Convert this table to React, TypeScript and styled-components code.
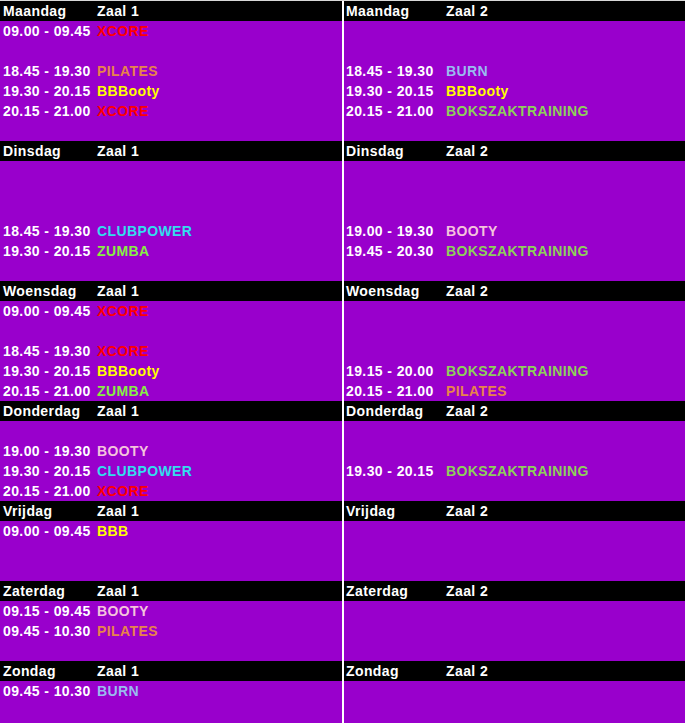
import React, { ReactElement } from "react";
import styled, { createGlobalStyle } from "styled-components";

const GlobalStyle = createGlobalStyle`
  html, body {
    margin: 0;
    padding: 0;
    background: #ffffff;
  }

  body {
    font-family: "Liberation Sans", Arial, sans-serif;
  }
`;

const colors = {
  purple: "#9900cc",
  XCORE: "#ff0000",
  PILATES: "#e8844a",
  BBBooty: "#ffff00",
  BBB: "#ffff00",
  BURN: "#99bbee",
  BOKSZAKTRAINING: "#8fd05a",
  CLUBPOWER: "#33ddee",
  ZUMBA: "#88ee44",
  BOOTY: "#f4c4dc",
};

type Slot = [string, keyof typeof colors] | null;

interface Day {
  name: string;
  left: Slot[];
  right: Slot[];
}

const days: Day[] = [
  {
    name: "Maandag",
    left: [
      ["09.00 - 09.45", "XCORE"],
      null,
      ["18.45 - 19.30", "PILATES"],
      ["19.30 - 20.15", "BBBooty"],
      ["20.15 - 21.00", "XCORE"],
      null,
    ],
    right: [
      null,
      null,
      ["18.45 - 19.30", "BURN"],
      ["19.30 - 20.15", "BBBooty"],
      ["20.15 - 21.00", "BOKSZAKTRAINING"],
      null,
    ],
  },
  {
    name: "Dinsdag",
    left: [
      null,
      null,
      null,
      ["18.45 - 19.30", "CLUBPOWER"],
      ["19.30 - 20.15", "ZUMBA"],
      null,
    ],
    right: [
      null,
      null,
      null,
      ["19.00 - 19.30", "BOOTY"],
      ["19.45 - 20.30", "BOKSZAKTRAINING"],
      null,
    ],
  },
  {
    name: "Woensdag",
    left: [
      ["09.00 - 09.45", "XCORE"],
      null,
      ["18.45 - 19.30", "XCORE"],
      ["19.30 - 20.15", "BBBooty"],
      ["20.15 - 21.00", "ZUMBA"],
    ],
    right: [
      null,
      null,
      null,
      ["19.15 - 20.00", "BOKSZAKTRAINING"],
      ["20.15 - 21.00", "PILATES"],
    ],
  },
  {
    name: "Donderdag",
    left: [
      null,
      ["19.00 - 19.30", "BOOTY"],
      ["19.30 - 20.15", "CLUBPOWER"],
      ["20.15 - 21.00", "XCORE"],
    ],
    right: [null, null, ["19.30 - 20.15", "BOKSZAKTRAINING"], null],
  },
  {
    name: "Vrijdag",
    left: [["09.00 - 09.45", "BBB"], null, null],
    right: [null, null, null],
  },
  {
    name: "Zaterdag",
    left: [["09.15 - 09.45", "BOOTY"], ["09.45 - 10.30", "PILATES"], null],
    right: [null, null, null],
  },
  {
    name: "Zondag",
    left: [["09.45 - 10.30", "BURN"], null],
    right: [null, null],
  },
];

const Schedule = styled.div`
  width: 685px;
  border-top: 1px solid #d8d8d8;
`;

const DayRow = styled.div`
  display: grid;
  grid-template-columns: 342px 341px;
  column-gap: 2px;
  background: #ffffff;

  &:last-child {
    padding-bottom: 2px;
    background: linear-gradient(#ffffff, #ffffff) 342px 0 / 2px 100% no-repeat,
      ${colors.purple};
  }
`;

const Panel = styled.div`
  display: flex;
  flex-direction: column;
  background: ${colors.purple};
`;

const Line = styled.div<{ $header?: boolean; $first: number }>`
  display: grid;
  grid-template-columns: ${(p) => p.$first}px 1fr;
  height: 20px;
  line-height: 20px;
  font-size: 14px;
  font-weight: bold;
  letter-spacing: 0.4px;
  color: #ffffff;
  background: ${(p) => (p.$header ? "#000000" : "transparent")};
  white-space: nowrap;
`;

const Cell = styled.span<{ $pad: number }>`
  padding-left: ${(p) => p.$pad}px;
`;

const Activity = styled(Cell)<{ $color: string }>`
  color: ${(p) => p.$color};
`;

function DayPanel(props: {
  day: string;
  zaal: number;
  slots: Slot[];
  first: number;
  pad: number;
}): ReactElement {
  const { day, zaal, slots, first, pad } = props;

  return (
    <Panel>
      <Line $header $first={first}>
        <Cell $pad={pad}>{day}</Cell>
        <Cell $pad={pad}>Zaal {zaal}</Cell>
      </Line>
      {slots.map((slot, i) => (
        <Line key={i} $first={first}>
          {slot && (
            <>
              <Cell $pad={pad}>{slot[0]}</Cell>
              <Activity $pad={pad} $color={colors[slot[1]]}>
                {slot[1]}
              </Activity>
            </>
          )}
        </Line>
      ))}
    </Panel>
  );
}

export default function App(): ReactElement {
  return (
    <>
      <GlobalStyle />
      <Schedule>
        {days.map((day) => (
          <DayRow key={day.name}>
            <DayPanel day={day.name} zaal={1} slots={day.left} first={94} pad={3} />
            <DayPanel day={day.name} zaal={2} slots={day.right} first={100} pad={2} />
          </DayRow>
        ))}
      </Schedule>
    </>
  );
}
